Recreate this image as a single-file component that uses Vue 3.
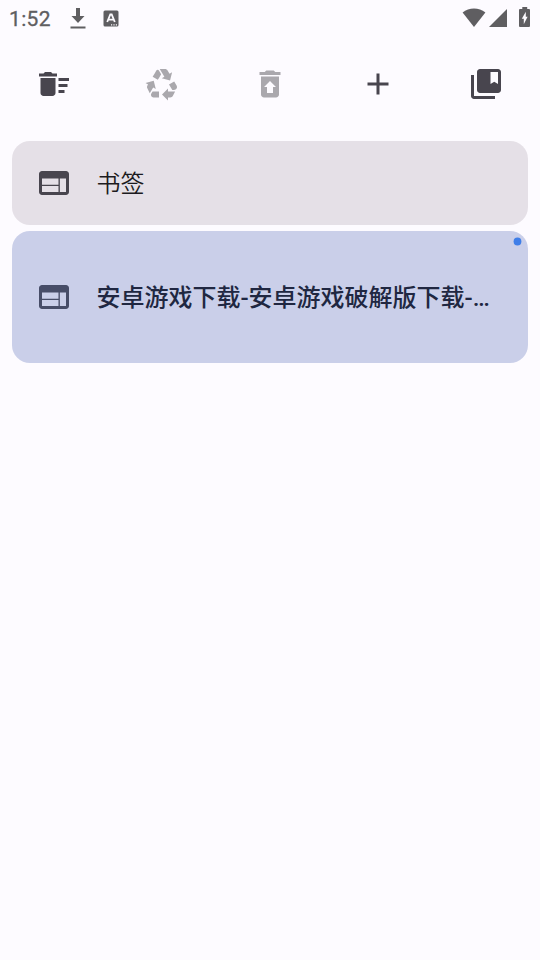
<script setup>
const actions = [
  { name: 'sweep', label: '清除', paths: ['M15 16h4v2h-4zm0-8h7v2h-7zm0 4h6v2h-6zM3 18c0 1.1.9 2 2 2h6c1.1 0 2-.9 2-2V8H3v10zM14 5h-3l-1-1H6L5 5H2v2h12z'] },
  { name: 'recycle', label: '回收', disabled: true, paths: ['M5.77 7.15L7.2 4.78l1.03-1.71c.39-.65 1.33-.65 1.72 0l1.48 2.46-1.23 2.06-1 1.62-3.43-2.06zm15.95 5.82l-1.6-2.66-3.46 2L18.87 16H20c.76 0 1.45-.43 1.79-1.11.14-.28.21-.58.21-.89 0-.36-.1-.71-.28-1.03zM16 21h1.5c.76 0 1.45-.43 1.79-1.11L20.74 17H16v-2l-4 4 4 4v-2zm-6-4H5.7l-.84 1.41c-.3.5-.32 1.12-.06 1.65.28.57.87.94 1.52.94H10v-4zm-3.88-2.65l1.73 1.04L6.48 9.9 1 11.27l1.7 1.02-.41.69c-.35.59-.38 1.31-.07 1.92l1.63 3.26 2.27-3.81zm10.9-9.21l-1.3-2.17C15.35 2.37 14.7 2 14 2h-3.53l3.12 5.2-1.72 1.03 5.49 1.37 1.37-5.49-1.71 1.03z'] },
  { name: 'restore', label: '恢复', disabled: true, paths: ['M19 4h-3.5l-1-1h-5l-1 1H5v2h14V4zM6 7v12c0 1.1.9 2 2 2h8c1.1 0 2-.9 2-2V7H6zm8 7v4h-4v-4H8l4-4 4 4h-2z'] },
  { name: 'add', label: '新建', paths: ['M19 13h-6v6h-2v-6H5v-2h6V5h2v6h6v2z'] },
  { name: 'bookmarks', label: '收藏', paths: ['M4 6H2v14c0 1.1.9 2 2 2h14v-2H4V6z', 'M20 2H8c-1.1 0-2 .9-2 2v12c0 1.1.9 2 2 2h12c1.1 0 2-.9 2-2V4c0-1.1-.9-2-2-2zm0 10l-2.5-1.5L15 12V4h5v8z'] },
]
const tabs = [
  { title: '书签', active: false },
  { title: '安卓游戏下载-安卓游戏破解版下载-…', active: true },
]
const web = 'M20 4H4c-1.1 0-2 .9-2 2v12c0 1.1.9 2 2 2h16c1.1 0 2-.9 2-2V6c0-1.1-.9-2-2-2zm-5 14H4v-4h11v4zm0-4.9H4V9h11v4.1zm5 4.9h-4.1V9H20v9z'
</script>

<template>
  <div class="screen">
    <header class="status">
      <span class="time">1:52</span>
      <svg class="download" width="16" height="22" viewBox="0 0 16 22"><path d="M6 0h4v8h4.5L8 15 1.5 8H6zM.5 18.5h15v2H.5z" /></svg>
      <svg class="input" width="16" height="17" viewBox="0 0 16 17">
        <rect x=".5" y=".5" width="15" height="16" rx="1.5" />
        <path class="mark" d="M4.2 12 7.3 4.5h1.4l3.1 7.5M5.5 9.7h5" />
        <path class="dots" d="M8 14.8h1.2M10.4 14.8h1.2M12.8 14.8H14" />
      </svg>
      <span class="spacer"></span>
      <svg width="24" height="20" viewBox="0 0 24 20"><path d="M.6 4.6C7-1 17-1 23.4 4.6L12 19z" /></svg>
      <svg class="signal" width="19" height="19" viewBox="0 0 19 19"><path d="M18 0v18H0z" /></svg>
      <svg class="battery" width="12" height="20" viewBox="0 0 12 20">
        <path d="M3.3 0h4.9v2H10q1 0 1 1v16q0 1-1 1H1q-1 0-1-1V3q0-1 1-1h2.3z" />
        <path class="bolt" d="M6.8 4.8 2.8 11.8h2v5.4L8.6 9.8H6.8z" />
      </svg>
    </header>
    <nav class="toolbar">
      <button v-for="a in actions" :key="a.name" :class="{ disabled: a.disabled }" :disabled="a.disabled" :aria-label="a.label">
        <svg width="36" height="36" viewBox="0 0 24 24"><path v-for="p in a.paths" :key="p" :d="p" /></svg>
      </button>
    </nav>
    <main class="tabs">
      <article v-for="t in tabs" :key="t.title" class="tab" :class="{ active: t.active }">
        <svg width="36" height="36" viewBox="0 0 24 24"><path :d="web" /></svg>
        <span class="title">{{ t.title }}</span>
        <svg v-if="t.active" class="dot" width="9" height="9" viewBox="0 0 9 9"><circle cx="4.5" cy="4.5" r="3.9" /></svg>
      </article>
    </main>
  </div>
</template>

<style>
body { background: #fdfbff; }
</style>

<style scoped>
.screen {
  min-height: 960px;
  background: #fdfbff;
  font-family: Roboto, "Noto Sans CJK SC", sans-serif;
}
svg { display: block; flex: none; fill: currentColor; }
.status {
  display: flex;
  align-items: center;
  height: 36px;
  padding: 0 9px;
  box-sizing: border-box;
  color: #5f5e61;
}
.time {
  width: 61px;
  padding-top: 2px;
  font-size: 21px;
  line-height: 36px;
  letter-spacing: .35px;
  -webkit-text-stroke: .3px currentColor;
}
.download { margin: 2px 0 0 .4px; }
.input { margin: 1px 0 0 16.6px; }
.mark { fill: none; stroke: #fdfbff; stroke-width: 1.8; }
.dots { fill: none; stroke: #fdfbff; stroke-width: 1.2; }
.spacer { flex: 1; }
.signal { margin-left: 3px; }
.battery { margin-left: 11px; margin-top: -2px; }
.bolt { fill: #fdfbff; }
.toolbar {
  display: flex;
  height: 96px;
  color: #48454e;
}
.toolbar button {
  flex: 1;
  display: flex;
  align-items: center;
  justify-content: center;
  padding: 0;
  border: 0;
  background: none;
  color: inherit;
}
.toolbar .disabled { color: #aaa8ad; }
.tabs {
  display: flex;
  flex-direction: column;
  gap: 6px;
  padding: 9px 12px;
}
.tab {
  position: relative;
  display: flex;
  align-items: center;
  gap: 24.4px;
  height: 84px;
  padding: 0 24px;
  box-sizing: border-box;
  border-radius: 18px;
  background: #e5e0e7;
  color: #48454e;
}
.title {
  flex: 1;
  min-width: 0;
  white-space: nowrap;
  font-size: 24px;
  font-weight: 350;
  line-height: 36px;
  padding-top: 2px;
  color: #1c1b20;
}
.tab.active { height: 132px; background: #cacfe9; color: #474d68; }
.active .title { font-weight: 500; color: #202741; }
.dot {
  position: absolute;
  top: 6px;
  right: 6px;
  color: #3f7ee8;
}
</style>
